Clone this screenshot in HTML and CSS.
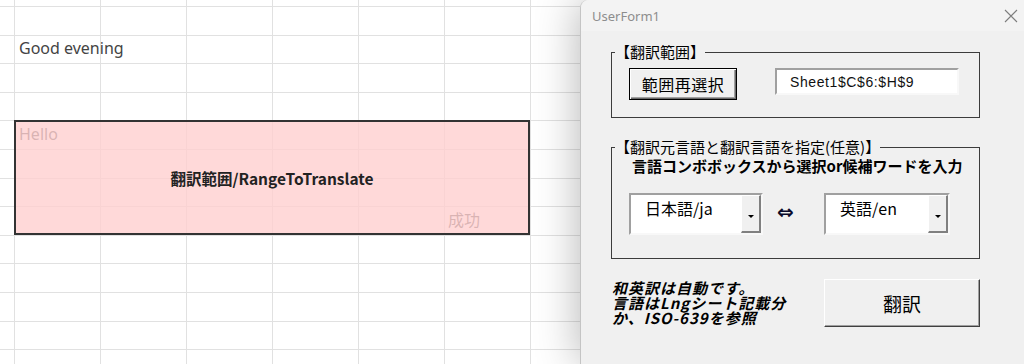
FILE: index.html
```html
<!DOCTYPE html>
<html lang="ja">
  <head>
    <title> UserForm1 </title>
    <meta charset="utf-8">
    <link rel="stylesheet" href="styles.css">
  </head>

  <body>
    <div class="app">
      <div class="sheet">
        <div class="cell greet">Good evening</div>
        <div class="cell hello">Hello</div>
        <div class="cell done">成功</div>
        <div class="shape"><span>翻訳範囲/RangeToTranslate</span></div>
      </div>

      <div class="form">
        <div class="titlebar">
          <span>UserForm1</span>
          <svg class="close" width="14" height="14" viewBox="0 0 14 14">
            <path d="M1 1L13 13M13 1L1 13" stroke="#7d7d7d" stroke-width="1.1" fill="none"/>
          </svg>
        </div>

        <div class="form-body">
          <fieldset class="frame frame-range">
            <legend>【翻訳範囲】</legend>
            <div class="row">
              <button class="btn btn-reselect">範囲再選択</button>
              <div class="textbox">Sheet1$C$6:$H$9</div>
            </div>
          </fieldset>

          <fieldset class="frame frame-lang">
            <legend>【翻訳元言語と翻訳言語を指定(任意)】</legend>
            <p class="hint">言語コンボボックスから選択or候補ワードを入力</p>
            <div class="combos">
              <div class="combo combo-src">
                <span>日本語/ja</span>
                <div class="drop"></div>
              </div>
              <span class="swap">⇔</span>
              <div class="combo combo-dst">
                <span>英語/en</span>
                <div class="drop"></div>
              </div>
            </div>
          </fieldset>

          <div class="footer">
            <div class="note">
              <p>和英訳は自動です。</p>
              <p>言語はLngシート記載分</p>
              <p>か、ISO-639を参照</p>
            </div>
            <button class="btn btn-translate">翻訳</button>
          </div>
        </div>
      </div>
    </div>
  </body>
</html>
```

FILE: styles.css
```css
html, body {
  height: 100%;
  margin: 0;
}
body {
  background: #fff;
  overflow: hidden;
  font-family: "Noto Sans", "Noto Sans CJK JP", sans-serif;
}
.app {
  display: flex;
  height: 364px;
}

/* spreadsheet */
.sheet {
  width: 580px;
  flex: none;
  display: grid;
  grid-template-columns: 14px repeat(6, 86px) 1fr;
  grid-template-rows: 6px repeat(12, 28.6px) 1fr;
  background-image:
    repeating-linear-gradient(to right, #e1e1e1 0 1px, transparent 1px 86px),
    repeating-linear-gradient(to bottom, #e1e1e1 0 1px, transparent 1px 28.6px);
  background-position: 14px 0, 0 6px;
}
.cell {
  display: flex;
  align-items: flex-end;
  padding: 0 0 5px 5px;
  font-size: 16px;
  line-height: 20px;
  color: #444;
  white-space: nowrap;
}
.greet {
  grid-row: 3;
  grid-column: 2;
}
.hello {
  grid-row: 6;
  grid-column: 2;
}
.done {
  grid-row: 9;
  grid-column: 7;
  padding-left: 4px;
}
.shape {
  grid-row: 6 / 10;
  grid-column: 2 / 8;
  display: flex;
  align-items: center;
  justify-content: center;
  background: rgba(255, 208, 208, 0.8);
  border: 2px solid #333;
  font-family: "Noto Sans CJK JP", sans-serif;
  font-size: 15.5px;
  font-weight: 700;
  color: #222;
}

/* user form */
.form {
  width: 444px;
  flex: none;
  display: flex;
  flex-direction: column;
  position: relative;
  z-index: 1;
  background: #f0f0f0;
  border-left: 1px solid #c4c4c4;
  border-top-left-radius: 8px;
  box-shadow: 0 0 45px rgba(0, 0, 0, 0.3);
  font-family: "Noto Sans CJK JP", sans-serif;
  color: #000;
}
.titlebar {
  height: 31px;
  display: flex;
  align-items: center;
  justify-content: space-between;
  padding: 0 7px 0 11px;
  background: #f3f3f3;
  border-top-left-radius: 8px;
  font: 13px "Noto Sans", sans-serif;
  color: #8d8d8d;
}
.form-body {
  display: flex;
  flex-direction: column;
  padding: 13px 0 0 30px;
}
.frame {
  width: 369px;
  box-sizing: border-box;
  min-width: 0;
  margin: 0;
  padding: 0;
  border: 1px solid #3c3c3c;
}
.frame legend {
  margin-left: 3px;
  padding: 0;
  font-size: 15px;
  line-height: 16px;
}
.frame-range .row {
  display: flex;
  align-items: flex-start;
  gap: 38px;
  padding: 8px 0 17px 17px;
}
.btn {
  padding: 0;
  background: #f0f0f0;
  color: #000;
  font-family: inherit;
  border: 1px solid;
  border-color: #fff #404040 #404040 #fff;
  box-shadow: inset -1px -1px #a0a0a0;
}
.btn-reselect {
  width: 108px;
  height: 32px;
  font-size: 16px;
  letter-spacing: 0.5px;
  border-color: #000;
  box-shadow: inset 1px 1px #fff, inset -1px -1px #696969, inset -2px -2px #a0a0a0;
}
.textbox {
  width: 184px;
  height: 27px;
  box-sizing: border-box;
  display: flex;
  align-items: center;
  padding-left: 13px;
  background: #fff;
  border: 2px solid;
  border-color: #a0a0a0 #f8f8f8 #f8f8f8 #a0a0a0;
  font: 14px "Liberation Sans", sans-serif;
  letter-spacing: 0.6px;
  color: #111;
}
.frame-lang {
  margin-top: 21px;
}
.hint {
  margin: 2px 0 0;
  padding-left: 20px;
  font-size: 15px;
  font-weight: 700;
  line-height: 17px;
}
.combos {
  display: flex;
  align-items: center;
  padding: 19px 0 23px 17px;
}
.combo {
  height: 42px;
  box-sizing: border-box;
  display: flex;
  justify-content: space-between;
  background: #fff;
  border: 2px solid;
  border-color: #a0a0a0 #f8f8f8 #f8f8f8 #a0a0a0;
  font-size: 16px;
}
.combo span {
  padding: 3px 0 0 14px;
  line-height: 20px;
}
.combo-src {
  width: 134px;
}
.combo-dst {
  width: 126px;
}
.drop {
  width: 20px;
  box-sizing: border-box;
  display: flex;
  align-items: center;
  justify-content: center;
  background: #f0f0f0;
  border-style: solid;
  border-width: 1px 2px 2px 1px;
  border-color: #fff #808080 #808080 #fff;
}
.drop::after {
  content: "";
  margin-top: 6px;
  border-left: 3px solid transparent;
  border-right: 3px solid transparent;
  border-top: 3px solid #000;
}
.swap {
  width: 20px;
  margin: 0 27px 0 14px;
  padding-bottom: 4px;
  font-family: "DejaVu Sans", sans-serif;
  font-size: 20px;
  font-weight: 700;
  line-height: 20px;
  color: #0a0a2a;
}
.footer {
  width: 369px;
  display: flex;
  align-items: flex-start;
  justify-content: space-between;
  padding-top: 20px;
}
.note {
  margin: 1px 0 0 1px;
  font-size: 15px;
  font-weight: 700;
  font-style: italic;
  line-height: 15px;
  letter-spacing: 1px;
}
.note p {
  height: 15px;
  margin: 0;
}
.btn-translate {
  width: 156px;
  height: 48px;
  font-size: 19px;
}
```
